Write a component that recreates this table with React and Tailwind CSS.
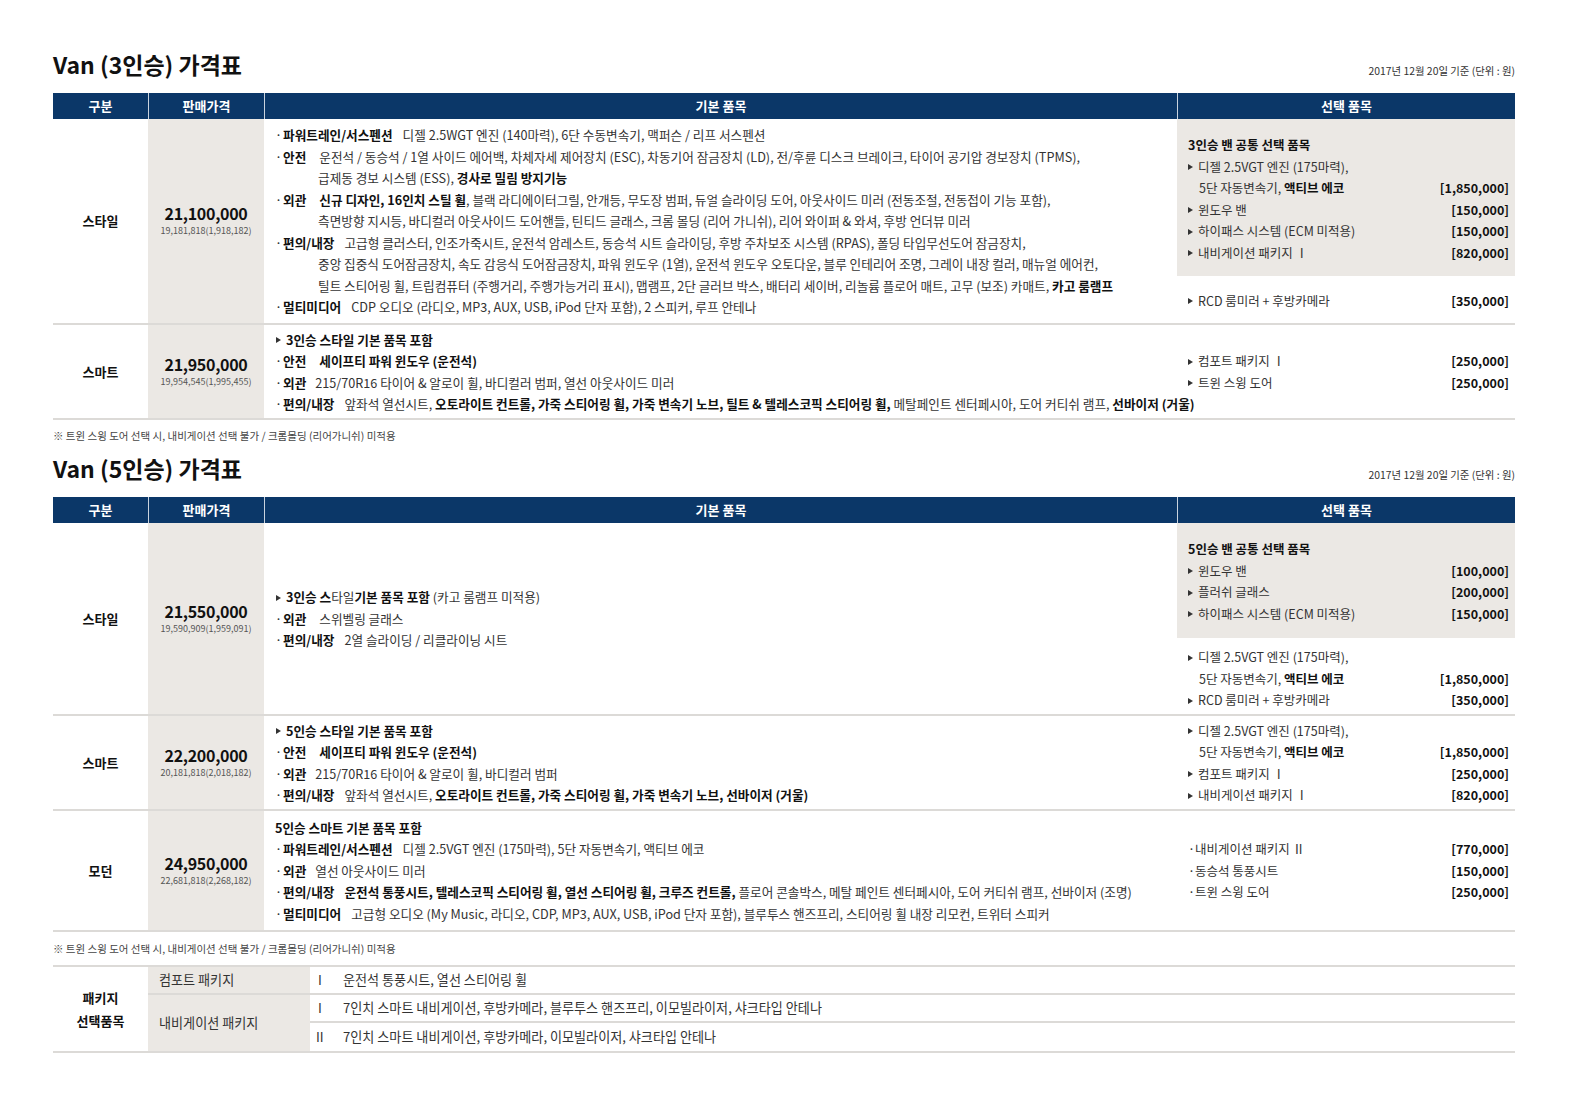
import React from 'react';

const cols = 'grid grid-cols-[95px_116px_913px_338px]';

const Tri = ({ className = '' }) => (
  <span className={`inline-block w-0 h-0 border-y-[3.5px] border-y-transparent border-l-[5px] border-l-[#333] align-middle mr-[5px] relative -top-[1px] ${className}`} />
);

const Dot = () => <span className="inline-block w-[8px]">·</span>;

// one bullet line of 기본 품목, continuation lines hang under the text
const Item = ({ label, children, cont = [], gap = 'ml-[10px]' }) => (
  <div>
    <div className="whitespace-nowrap">
      <Dot />
      <b className="font-bold text-[#111]">{label}</b>
      <span className={gap}>{children}</span>
    </div>
    {cont.map((c, i) => (
      <div key={i} className="pl-[43px] whitespace-nowrap">{c}</div>
    ))}
  </div>
);

const Opt = ({ children, price, mark = 'tri', cont }) => (
  <div>
    {cont ? (
      <>
        <div className="whitespace-nowrap"><Tri />{children}</div>
        <div className="flex justify-between pl-[11px]">
          <span>{cont}</span>
          <span className="font-bold text-[#111]">{price}</span>
        </div>
      </>
    ) : (
      <div className="flex justify-between">
        <span className="whitespace-nowrap">
          {mark === 'tri' ? <Tri /> : <span className="inline-block w-[7px]">·</span>}
          {children}
        </span>
        <span className="font-bold text-[#111]">{price}</span>
      </div>
    )}
  </div>
);

const B = ({ children }) => <b className="font-bold text-[#111]">{children}</b>;

const Header = () => (
  <div className={`${cols} h-[26px] bg-[#0b3768] text-white font-bold text-[13px]`}>
    <div className="flex items-center justify-center">구분</div>
    <div className="flex items-center justify-center border-l border-[#c9d3df]">판매가격</div>
    <div className="flex items-center justify-center border-l border-[#c9d3df]">기본 품목</div>
    <div className="flex items-center justify-center border-l border-[#c9d3df]">선택 품목</div>
  </div>
);

const Price = ({ value, sub }) => (
  <div className="bg-[#ebe8e4] flex flex-col items-center justify-center pb-[2px]">
    <div className="text-[16px] font-bold leading-[20px] tracking-[-0.3px] text-[#111]">{value}</div>
    <div className="text-[9px] leading-[12px] mt-[2px] text-[#555]">{sub}</div>
  </div>
);

const Row = ({ h, name, price, sub, basic, options }) => (
  <div className={`${cols} ${h} border-b-2 border-[#dcdad7]`}>
    <div className="flex items-center justify-center font-bold text-[13px] text-[#111]">{name}</div>
    <Price value={price} sub={sub} />
    <div className="flex flex-col justify-center pl-[11px] leading-[21.5px] text-[12.65px]">{basic}</div>
    <div className="flex flex-col leading-[21.5px] text-[12.5px]">{options}</div>
  </div>
);

const Title = ({ children }) => (
  <div className="flex items-end justify-between">
    <h1 className="text-[23px] leading-[28px] font-bold text-[#111]">{children}</h1>
    <div className="text-[10.4px] leading-[14px] text-[#333]">2017년 12월 20일 기준 (단위 : 원)</div>
  </div>
);

const Note = ({ className }) => (
  <div className={`text-[10.5px] leading-[14px] text-[#444] ${className}`}>
    ※ 트윈 스윙 도어 선택 시, 내비게이션 선택 불가 / 크롬몰딩 (리어가니쉬) 미적용
  </div>
);

export default function App() {
  return (
    <div className="bg-white pl-[53px] pt-[50px] pb-[40px] text-[#333] font-['Noto_Sans_CJK_KR','Noto_Sans',sans-serif]">
      <div className="w-[1462px]">
        {/* 3인승 */}
        <Title>Van (3인승) 가격표</Title>
        <div className="mt-[15px]">
          <Header />
          <Row
            h="h-[206px]"
            name="스타일"
            price="21,100,000"
            sub="19,181,818(1,918,182)"
            basic={
              <>
                <Item label="파워트레인/서스펜션">디젤 2.5WGT 엔진 (140마력), 6단 수동변속기, 맥퍼슨 / 리프 서스펜션</Item>
                <Item
                  label="안전"
                  gap="ml-[13px]"
                  cont={[<>급제동 경보 시스템 (ESS), <B>경사로 밀림 방지기능</B></>]}
                >
                  운전석 / 동승석 / 1열 사이드 에어백, 차체자세 제어장치 (ESC), 차동기어 잠금장치 (LD), 전/후륜 디스크 브레이크, 타이어 공기압 경보장치 (TPMS),
                </Item>
                <Item
                  label="외관"
                  gap="ml-[13px]"
                  cont={['측면방향 지시등, 바디컬러 아웃사이드 도어핸들, 틴티드 글래스, 크롬 몰딩 (리어 가니쉬), 리어 와이퍼 & 와셔, 후방 언더뷰 미러']}
                >
                  <B>신규 디자인, 16인치 스틸 휠</B>, 블랙 라디에이터그릴, 안개등, 무도장 범퍼, 듀얼 슬라이딩 도어, 아웃사이드 미러 (전동조절, 전동접이 기능 포함),
                </Item>
                <Item
                  label="편의/내장"
                  cont={[
                    '중앙 집중식 도어잠금장치, 속도 감응식 도어잠금장치, 파워 윈도우 (1열), 운전석 윈도우 오토다운, 블루 인테리어 조명, 그레이 내장 컬러, 매뉴얼 에어컨,',
                    <>틸트 스티어링 휠, 트립컴퓨터 (주행거리, 주행가능거리 표시), 맵램프, 2단 글러브 박스, 배터리 세이버, 리놀륨 플로어 매트, 고무 (보조) 카매트, <B>카고 룸램프</B></>,
                  ]}
                >
                  고급형 클러스터, 인조가죽시트, 운전석 암레스트, 동승석 시트 슬라이딩, 후방 주차보조 시스템 (RPAS), 폴딩 타입무선도어 잠금장치,
                </Item>
                <Item label="멀티미디어">CDP 오디오 (라디오, MP3, AUX, USB, iPod 단자 포함), 2 스피커, 루프 안테나</Item>
              </>
            }
            options={
              <>
                <div className="bg-[#ebe8e4] h-[157px] pt-[15px] pl-[11px] pr-[6px]">
                  <div className="font-bold text-[#111]">3인승 밴 공통 선택 품목</div>
                  <Opt price="[1,850,000]" cont={<>5단 자동변속기, <B>액티브 에코</B></>}>디젤 2.5VGT 엔진 (175마력),</Opt>
                  <Opt price="[150,000]">윈도우 밴</Opt>
                  <Opt price="[150,000]">하이패스 시스템 (ECM 미적용)</Opt>
                  <Opt price="[820,000]">내비게이션 패키지 Ⅰ</Opt>
                </div>
                <div className="flex-1 flex flex-col justify-center pl-[11px] pr-[6px] pt-[2px]">
                  <Opt price="[350,000]">RCD 룸미러 + 후방카메라</Opt>
                </div>
              </>
            }
          />
          <Row
            h="h-[95px]"
            name="스마트"
            price="21,950,000"
            sub="19,954,545(1,995,455)"
            basic={
              <>
                <div className="whitespace-nowrap"><Tri className="ml-[1px] mr-[4px]" /><B>3인승 스타일 기본 품목 포함</B></div>
                <Item label="안전" gap="ml-[13px]"><B>세이프티 파워 윈도우 (운전석)</B></Item>
                <Item label="외관" gap="ml-[9px]">215/70R16 타이어 &amp; 알로이 휠, 바디컬러 범퍼, 열선 아웃사이드 미러</Item>
                <Item label="편의/내장">
                  앞좌석 열선시트, <B>오토라이트 컨트롤, 가죽 스티어링 휠, 가죽 변속기 노브, 틸트 &amp; 텔레스코픽 스티어링 휠,</B> 메탈페인트 센터페시아, 도어 커티쉬 램프, <B>선바이저 (거울)</B>
                </Item>
              </>
            }
            options={
              <div className="flex-1 flex flex-col justify-center pl-[11px] pr-[6px]">
                <Opt price="[250,000]">컴포트 패키지 Ⅰ</Opt>
                <Opt price="[250,000]">트윈 스윙 도어</Opt>
              </div>
            }
          />
        </div>
        <Note className="mt-[9px]" />

        {/* 5인승 */}
        <div className="mt-[11px]">
          <Title>Van (5인승) 가격표</Title>
        </div>
        <div className="mt-[15px]">
          <Header />
          <Row
            h="h-[193px]"
            name="스타일"
            price="21,550,000"
            sub="19,590,909(1,959,091)"
            basic={
              <>
                <div className="whitespace-nowrap"><Tri className="ml-[1px] mr-[4px]" /><B>3인승 스</B>타일<B>기본 품목 포함</B> (카고 룸램프 미적용)</div>
                <Item label="외관" gap="ml-[13px]">스위벨링 글래스</Item>
                <Item label="편의/내장">2열 슬라이딩 / 리클라이닝 시트</Item>
              </>
            }
            options={
              <>
                <div className="bg-[#ebe8e4] h-[115px] pt-[15px] pl-[11px] pr-[6px]">
                  <div className="font-bold text-[#111]">5인승 밴 공통 선택 품목</div>
                  <Opt price="[100,000]">윈도우 밴</Opt>
                  <Opt price="[200,000]">플러쉬 글래스</Opt>
                  <Opt price="[150,000]">하이패스 시스템 (ECM 미적용)</Opt>
                </div>
                <div className="pt-[8px] pl-[11px] pr-[6px]">
                  <Opt price="[1,850,000]" cont={<>5단 자동변속기, <B>액티브 에코</B></>}>디젤 2.5VGT 엔진 (175마력),</Opt>
                  <Opt price="[350,000]">RCD 룸미러 + 후방카메라</Opt>
                </div>
              </>
            }
          />
          <Row
            h="h-[95px]"
            name="스마트"
            price="22,200,000"
            sub="20,181,818(2,018,182)"
            basic={
              <>
                <div className="whitespace-nowrap"><Tri className="ml-[1px] mr-[4px]" /><B>5인승 스타일 기본 품목 포함</B></div>
                <Item label="안전" gap="ml-[13px]"><B>세이프티 파워 윈도우 (운전석)</B></Item>
                <Item label="외관" gap="ml-[9px]">215/70R16 타이어 &amp; 알로이 휠, 바디컬러 범퍼</Item>
                <Item label="편의/내장">
                  앞좌석 열선시트, <B>오토라이트 컨트롤, 가죽 스티어링 휠, 가죽 변속기 노브, 선바이저 (거울)</B>
                </Item>
              </>
            }
            options={
              <div className="flex-1 flex flex-col justify-center pl-[11px] pr-[6px]">
                <Opt price="[1,850,000]" cont={<>5단 자동변속기, <B>액티브 에코</B></>}>디젤 2.5VGT 엔진 (175마력),</Opt>
                <Opt price="[250,000]">컴포트 패키지 Ⅰ</Opt>
                <Opt price="[820,000]">내비게이션 패키지 Ⅰ</Opt>
              </div>
            }
          />
          <Row
            h="h-[121px]"
            name="모던"
            price="24,950,000"
            sub="22,681,818(2,268,182)"
            basic={
              <>
                <div className="whitespace-nowrap"><B>5인승 스마트 기본 품목 포함</B></div>
                <Item label="파워트레인/서스펜션">디젤 2.5VGT 엔진 (175마력), 5단 자동변속기, 액티브 에코</Item>
                <Item label="외관" gap="ml-[9px]">열선 아웃사이드 미러</Item>
                <Item label="편의/내장">
                  <B>운전석 통풍시트, 텔레스코픽 스티어링 휠, 열선 스티어링 휠, 크루즈 컨트롤,</B> 플로어 콘솔박스, 메탈 페인트 센터페시아, 도어 커티쉬 램프, 선바이저 (조명)
                </Item>
                <Item label="멀티미디어">고급형 오디오 (My Music, 라디오, CDP, MP3, AUX, USB, iPod 단자 포함), 블루투스 핸즈프리, 스티어링 휠 내장 리모컨, 트위터 스피커</Item>
              </>
            }
            options={
              <div className="flex-1 flex flex-col justify-center pl-[11px] pr-[6px]">
                <Opt mark="dot" price="[770,000]">내비게이션 패키지 Ⅱ</Opt>
                <Opt mark="dot" price="[150,000]">동승석 통풍시트</Opt>
                <Opt mark="dot" price="[250,000]">트윈 스윙 도어</Opt>
              </div>
            }
          />
        </div>
        <Note className="mt-[10px]" />

        {/* 패키지 선택품목 */}
        <div className="mt-[9px] border-y-2 border-[#dcdad7] grid grid-cols-[95px_162px_23px_1182px] grid-rows-[28px_28px_28px] text-[13.1px]">
          <div className="row-span-3 flex flex-col items-center justify-center font-bold text-[13px] leading-[23px] text-[#111]">
            <span>패키지</span>
            <span>선택품목</span>
          </div>
          <div className="bg-[#ebe8e4] flex items-center pl-[11px] border-b-2 border-[#dcdad7]">컴포트 패키지</div>
          <div className="flex items-center pl-[8px] border-b-2 border-[#dcdad7]">I</div>
          <div className="flex items-center pl-[10px] border-b-2 border-[#dcdad7]">운전석 통풍시트, 열선 스티어링 휠</div>
          <div className="row-span-2 bg-[#ebe8e4] flex items-center pl-[11px]">내비게이션 패키지</div>
          <div className="flex items-center pl-[8px] border-b-2 border-[#dcdad7]">I</div>
          <div className="flex items-center pl-[10px] border-b-2 border-[#dcdad7]">7인치 스마트 내비게이션, 후방카메라, 블루투스 핸즈프리, 이모빌라이저, 샤크타입 안테나</div>
          <div className="flex items-center pl-[6px]">II</div>
          <div className="flex items-center pl-[10px]">7인치 스마트 내비게이션, 후방카메라, 이모빌라이저, 샤크타입 안테나</div>
        </div>
      </div>
    </div>
  );
}
